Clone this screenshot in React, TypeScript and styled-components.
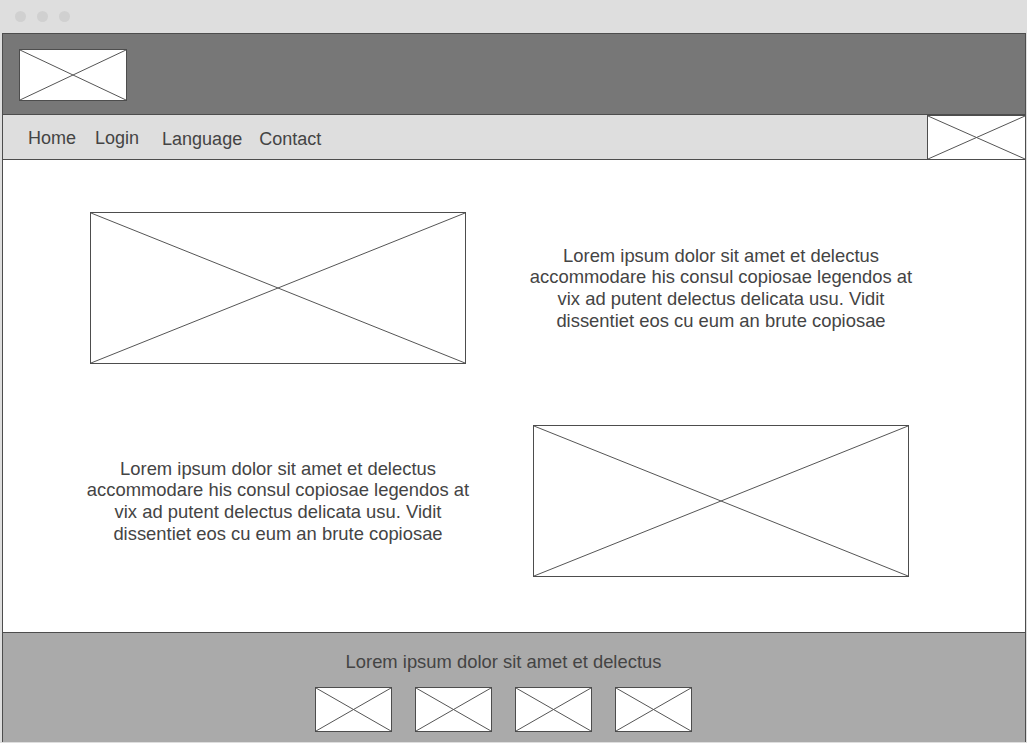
import styled, { createGlobalStyle } from "styled-components";

const GlobalStyle = createGlobalStyle`
  html, body {
    margin: 0;
    padding: 0;
    background: #dedede;
    font-family: "Liberation Sans", Arial, sans-serif;
  }
`;

const SWindow = styled.div`
  width: 1027px;
  height: 743px;
  display: flex;
  flex-direction: column;
  background: #dedede;
  overflow: hidden;
`;

const STitleBar = styled.div`
  height: 33px;
  flex-shrink: 0;
  display: flex;
  align-items: center;
  gap: 11px;
  padding: 0 0 1px 15px;
  box-sizing: border-box;
`;

const SDot = styled.span`
  width: 11px;
  height: 11px;
  border-radius: 50%;
  background: #d0d0d0;
`;

const SFrame = styled.div`
  margin: 0 1px 1px 2px;
  flex: 1;
  display: flex;
  flex-direction: column;
  border: 1px solid #4d4d4d;
  border-bottom: none;
`;

const SHeader = styled.header`
  height: 81px;
  background: #777777;
  display: flex;
  align-items: flex-start;
  padding: 15px 16px 0;
  box-sizing: border-box;
  border-bottom: 1px solid #4d4d4d;
`;

const SNav = styled.nav`
  height: 44px;
  background: #dedede;
  display: flex;
  align-items: center;
  border-bottom: 1px solid #4d4d4d;
  padding-left: 25px;
`;

const SNavLinks = styled.ul`
  display: flex;
  flex: 1;
  list-style: none;
  margin: 0;
  padding: 3px 0 0;
  gap: 19px;
`;

const SNavLink = styled.li<{ $shift?: number }>`
  font-size: 18px;
  color: #444444;
  margin-left: ${(p) => p.$shift ?? 0}px;
  padding-top: ${(p) => (p.$shift ? 1 : 0)}px;
`;

const SNavLogo = styled.div`
  align-self: flex-start;
  margin: 0 -1px -1px 0;
`;

const SContent = styled.main`
  height: 473px;
  background: #ffffff;
  border-bottom: 1px solid #4d4d4d;
  display: grid;
  grid-template-columns: 376px 376px;
  grid-auto-rows: 152px;
  column-gap: 67px;
  row-gap: 61px;
  padding: 52px 0 0 87px;
  box-sizing: border-box;
  align-items: center;
`;

const SText = styled.p`
  margin: 0 -12px;
  font-size: 18.4px;
  line-height: 21.7px;
  color: #444444;
  text-align: center;
`;

const SFooter = styled.footer`
  flex: 1;
  background: #aaaaaa;
  display: flex;
  flex-direction: column;
  align-items: center;
  padding: 18px 21px 0 0;
`;

const SFooterText = styled.p`
  margin: 0 0 14px;
  font-size: 18.4px;
  color: #444444;
`;

const SFooterIcons = styled.div`
  display: flex;
  gap: 23px;
`;

const SBox = styled.div<{ $w: number; $h: number }>`
  width: ${(p) => p.$w}px;
  height: ${(p) => p.$h}px;
  background: #ffffff;
  border: 1px solid #4d4d4d;
  box-sizing: border-box;
  flex-shrink: 0;

  svg {
    display: block;
    width: 100%;
    height: 100%;
  }
`;

const Placeholder = ({ w, h }: { w: number; h: number }) => (
  <SBox $w={w} $h={h}>
    <svg viewBox="0 0 100 100" preserveAspectRatio="none">
      <line x1="0" y1="0" x2="100" y2="100" stroke="#555" strokeWidth="1" vectorEffect="non-scaling-stroke" />
      <line x1="100" y1="0" x2="0" y2="100" stroke="#555" strokeWidth="1" vectorEffect="non-scaling-stroke" />
    </svg>
  </SBox>
);

const lorem =
  "Lorem ipsum dolor sit amet et delectus accommodare his consul copiosae legendos at vix ad putent delectus delicata usu. Vidit dissentiet eos cu eum an brute copiosae";

const App = () => {
  return (
    <>
      <GlobalStyle />
      <SWindow>
        <STitleBar>
          <SDot />
          <SDot />
          <SDot />
        </STitleBar>
        <SFrame>
          <SHeader>
            <Placeholder w={108} h={52} />
          </SHeader>
          <SNav>
            <SNavLinks>
              <SNavLink>Home</SNavLink>
              <SNavLink>Login</SNavLink>
              <SNavLink $shift={4}>Language</SNavLink>
              <SNavLink $shift={-2}>Contact</SNavLink>
            </SNavLinks>
            <SNavLogo>
              <Placeholder w={99} h={45} />
            </SNavLogo>
          </SNav>
          <SContent>
            <Placeholder w={376} h={152} />
            <SText>{lorem}</SText>
            <SText>{lorem}</SText>
            <Placeholder w={376} h={152} />
          </SContent>
          <SFooter>
            <SFooterText>Lorem ipsum dolor sit amet et delectus</SFooterText>
            <SFooterIcons>
              <Placeholder w={77} h={45} />
              <Placeholder w={77} h={45} />
              <Placeholder w={77} h={45} />
              <Placeholder w={77} h={45} />
            </SFooterIcons>
          </SFooter>
        </SFrame>
      </SWindow>
    </>
  );
};

export default App;
